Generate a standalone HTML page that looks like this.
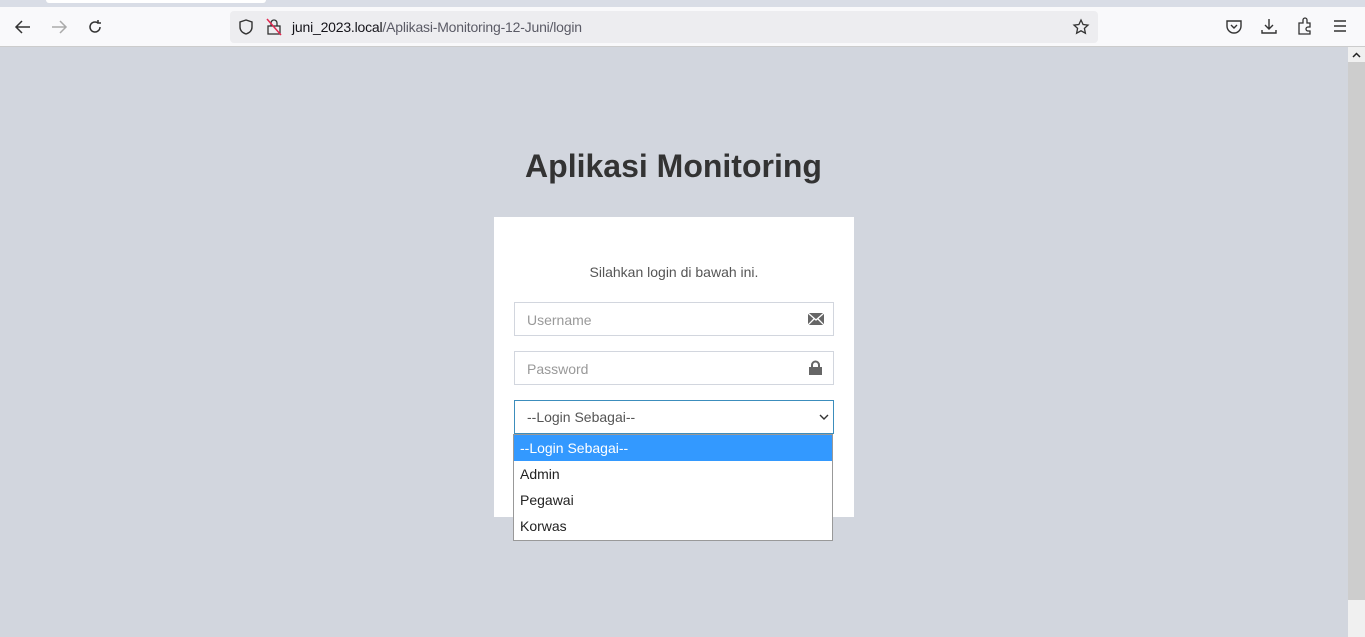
<!DOCTYPE html>
<html><head><meta charset="utf-8"><style>
*{box-sizing:border-box;margin:0;padding:0}
body{width:1365px;height:637px;overflow:hidden;background:#d2d6de;font-family:"Liberation Sans",sans-serif;position:relative}
.tabs{position:absolute;left:0;top:0;width:1365px;height:7px;background:#d9dde6}
.tab{position:absolute;left:46px;top:0;width:220px;height:3px;background:#fff;border-radius:0 0 3px 3px}
.bar{position:absolute;left:0;top:7px;width:1365px;height:40px;background:#f9f9fb;border-bottom:1px solid #ccc}
.url{position:absolute;left:230px;top:4px;width:868px;height:32px;background:#ededf0;border-radius:4px}
.url span{position:absolute;left:62px;top:8px;font-size:14px;color:#5b5b66;letter-spacing:-0.2px}
.url b{font-weight:normal;color:#15141a}
svg{position:absolute}
.scroll{position:absolute;right:0;top:47px;width:17px;height:590px;background:#f0f0f0}
.scroll .th{position:absolute;left:0;top:15px;width:17px;height:538px;background:#cdcdcd}
h1{position:absolute;left:0;width:1347px;top:148px;text-align:center;font-size:32px;color:#333;font-weight:bold}
.box{position:absolute;left:494px;top:217px;width:360px;height:300px;background:#fff}
.msg{position:absolute;top:47px;width:360px;text-align:center;font-size:14px;color:#555}
.in{position:absolute;left:20px;width:320px;height:34px;border:1px solid #d2d6de;font-size:14px;color:#999;padding:9px 12px}
.sel{position:absolute;left:20px;top:183px;width:320px;height:34px;border:1px solid #3c8dbc;font-size:14px;color:#555;padding:8px 12px}
.dd{position:absolute;left:513px;top:434px;width:320px;height:107px;background:#fff;border:1px solid #999;font-size:14px;color:#222}
.dd div{height:26px;padding:5px 6px}
.dd .a{background:#3399ff;color:#fff}
</style></head><body>
<div class="tabs"><div class="tab"></div></div>
<div class="bar">
<svg style="left:14px;top:12px" width="18" height="16" viewBox="0 0 18 16"><path d="M16 8H2M8 2L2 8l6 6" stroke="#333" stroke-width="1.5" fill="none"/></svg>
<svg style="left:50px;top:12px" width="18" height="16" viewBox="0 0 18 16"><path d="M2 8h14M10 2l6 6-6 6" stroke="#aaa" stroke-width="1.5" fill="none"/></svg>
<svg style="left:86px;top:11px" width="18" height="18" viewBox="0 0 18 18"><path d="M14 9a5 5 0 1 1-2-4M12 2v3h3" stroke="#333" stroke-width="1.5" fill="none"/></svg>
<div class="url">
<svg style="left:8px;top:8px" width="16" height="16" viewBox="0 0 16 16"><path d="M8 1L2 3v5c0 4 3 6 6 7 3-1 6-3 6-7V3z" stroke="#333" stroke-width="1.4" fill="none"/></svg>
<svg style="left:36px;top:7px" width="16" height="18" viewBox="0 0 16 18"><rect x="2" y="8" width="12" height="8" stroke="#333" fill="none" stroke-width="1.3"/><path d="M5 8V5a3 3 0 0 1 6 0v3" stroke="#333" fill="none" stroke-width="1.3"/><path d="M1 1l14 16" stroke="#e22850" stroke-width="1.5"/></svg>
<span><b>juni_2023.local</b>/Aplikasi-Monitoring-12-Juni/login</span>
<svg style="left:842px;top:7px" width="18" height="18" viewBox="0 0 18 18"><path d="M9 2l2.1 4.5 4.9.6-3.6 3.3 1 4.8L9 12.8 4.6 15.2l1-4.8L2 7.1l4.9-.6z" stroke="#333" stroke-width="1.3" fill="none"/></svg>
</div>
<svg style="left:1225px;top:12px" width="18" height="16" viewBox="0 0 18 16"><path d="M2 2h14v5a7 7 0 0 1-14 0z" stroke="#333" stroke-width="1.4" fill="none"/><path d="M6 6l3 3 3-3" stroke="#333" stroke-width="1.4" fill="none"/></svg>
<svg style="left:1260px;top:10px" width="18" height="18" viewBox="0 0 18 18"><path d="M9 2v10M5 8l4 4 4-4M2 13v3h14v-3" stroke="#333" stroke-width="1.4" fill="none"/></svg>
<svg style="left:1296px;top:10px" width="18" height="18" viewBox="0 0 18 18"><path d="M3 6h4V3a2 2 0 0 1 4 0v3h3v4h-2a2 2 0 0 0 0 4h2v3H3z" stroke="#333" stroke-width="1.3" fill="none"/></svg>
<svg style="left:1332px;top:12px" width="16" height="14" viewBox="0 0 16 14"><path d="M2 2h12M2 7h12M2 12h12" stroke="#333" stroke-width="1.4"/></svg>
</div>
<div class="scroll"><svg style="left:4px;top:5px" width="9" height="6" viewBox="0 0 9 6"><path d="M1 5l3.5-3.5L8 5" stroke="#222" stroke-width="1.5" fill="none"/></svg><div class="th"></div></div>
<h1>Aplikasi Monitoring</h1>
<div class="box">
<div class="msg">Silahkan login di bawah ini.</div>
<div class="in" style="top:85px">Username</div>
<svg style="left:314px;top:96px" width="16" height="12" viewBox="0 0 16 12"><rect width="16" height="12" fill="#666"/><path d="M0 0l8 7 8-7M0 12l6-6M16 12l-6-6" stroke="#fff" stroke-width="1.3" fill="none"/></svg>
<div class="in" style="top:134px">Password</div>
<svg style="left:315px;top:143px" width="13" height="15" viewBox="0 0 13 15"><path d="M3 7V5a3.5 3.5 0 0 1 7 0v2" stroke="#666" stroke-width="2" fill="none"/><rect x="0" y="7" width="13" height="8" fill="#666"/></svg>
<div class="sel">--Login Sebagai--</div>
<svg style="left:325px;top:197px" width="10" height="7" viewBox="0 0 10 7"><path d="M1 1l4 4 4-4" stroke="#333" stroke-width="1.4" fill="none"/></svg>
</div>
<div class="dd"><div class="a">--Login Sebagai--</div><div>Admin</div><div>Pegawai</div><div>Korwas</div></div>
</body></html>
